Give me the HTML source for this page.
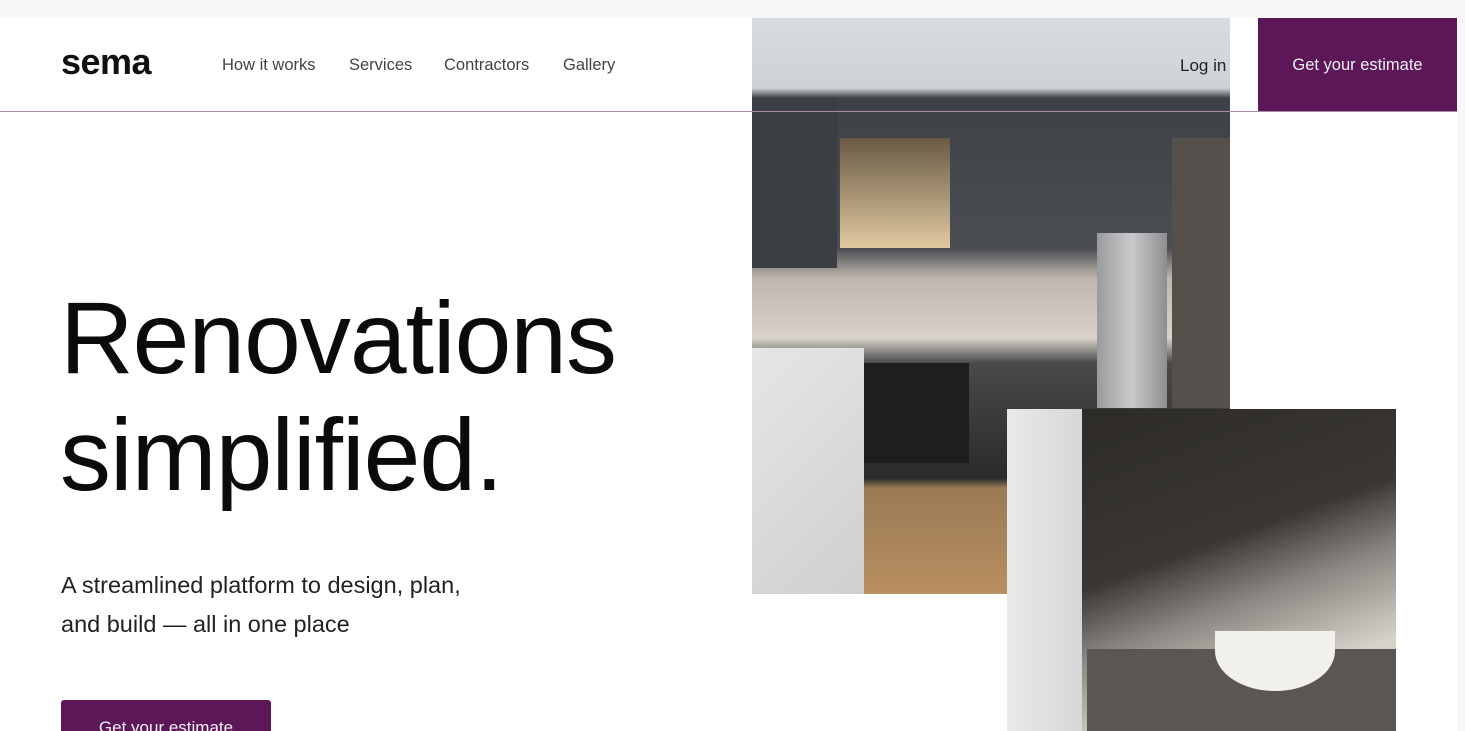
<!DOCTYPE html>
<html style="width:1465px;height:731px;overflow:hidden"><head><style>
*{margin:0;padding:0;box-sizing:border-box}
body{width:1465px;height:731px;overflow:hidden;background:#f7f7f7;font-family:"Liberation Sans",Arial,sans-serif;position:relative}
.page{position:absolute;left:0;top:18px;width:1457px;height:713px;background:#fff}
.hdr{position:absolute;left:0;top:111px;width:1457px;height:1px;background:#a98aa8;z-index:5}
.logo{position:absolute;left:61px;top:41px;font-size:36px;font-weight:bold;color:#111;letter-spacing:-0.5px}
.nav{position:absolute;top:56px;font-size:16.5px;color:#444}
.login{position:absolute;left:1180px;top:56px;font-size:17px;color:#222;z-index:4}
.cta{position:absolute;left:1258px;top:18px;width:199px;height:93px;background:#5c1759;color:#eee;font-size:16.5px;text-align:center;line-height:95px;z-index:4}
h1{position:absolute;left:60px;top:280px;font-size:102px;font-weight:normal;line-height:117px;color:#0b0b0b;letter-spacing:-1px}
.sub{position:absolute;left:61px;top:566px;font-size:23.5px;line-height:38.5px;color:#222}
.btn{position:absolute;left:61px;top:700px;width:210px;height:31px;overflow:hidden;background:#5c1759;border-radius:3px 3px 0 0;color:#eee;font-size:17px;text-align:center;padding-top:18px}
.k{position:absolute;left:752px;top:18px;width:478px;height:576px;overflow:hidden;
background:linear-gradient(180deg,#d9dcdf 0,#cfd2d5 70px,#3e4247 80px,#4a4d52 230px,#bfb7ad 260px,#d8d2c8 320px,#4a4a4c 345px,#2a2a2c 460px,#9a7a55 470px,#b88f60 576px)}
.b{position:absolute;left:1007px;top:409px;width:389px;height:322px;overflow:hidden;background:linear-gradient(160deg,#2b2926 0,#3a3733 45%,#8a8580 60%,#d7d2ca 80%,#cbc5bc 100%)}
</style></head><body>
<div class="page"></div>
<div class="logo">sema</div>
<div class="nav" style="left:222px">How it works</div>
<div class="nav" style="left:349px">Services</div>
<div class="nav" style="left:444px">Contractors</div>
<div class="nav" style="left:563px">Gallery</div>
<div class="k">
 <div style="position:absolute;left:0;top:80px;width:85px;height:170px;background:#3b3e43"></div>
 <div style="position:absolute;left:88px;top:120px;width:110px;height:110px;background:linear-gradient(180deg,#6a5a45,#e0c9a0)"></div>
 <div style="position:absolute;left:345px;top:215px;width:70px;height:175px;background:linear-gradient(90deg,#9a9b9d,#c9cacc,#8d8e90)"></div>
 <div style="position:absolute;left:0;top:330px;width:112px;height:246px;background:linear-gradient(135deg,#e6e6e6,#cfcfcf)"></div>
 <div style="position:absolute;left:112px;top:345px;width:105px;height:100px;background:#1e1e20"></div>
 <div style="position:absolute;left:420px;top:120px;width:58px;height:270px;background:#55504c"></div>
</div>
<div class="b">
 <div style="position:absolute;left:0;top:0;width:75px;height:322px;background:linear-gradient(90deg,#e9e9e9,#d7d7d7)"></div>
 <div style="position:absolute;left:80px;top:240px;width:309px;height:82px;background:#5a5753"></div>
 <div style="position:absolute;left:208px;top:222px;width:120px;height:60px;border-radius:0 0 60px 60px/0 0 40px 40px;background:#f2f0ed"></div>
</div>
<div class="hdr"></div>
<div class="login">Log in</div>
<div class="cta">Get your estimate</div>
<h1>Renovations<br>simplified.</h1>
<div class="sub">A streamlined platform to design, plan,<br>and build — all in one place</div>
<div class="btn">Get your estimate</div>
</body></html>
